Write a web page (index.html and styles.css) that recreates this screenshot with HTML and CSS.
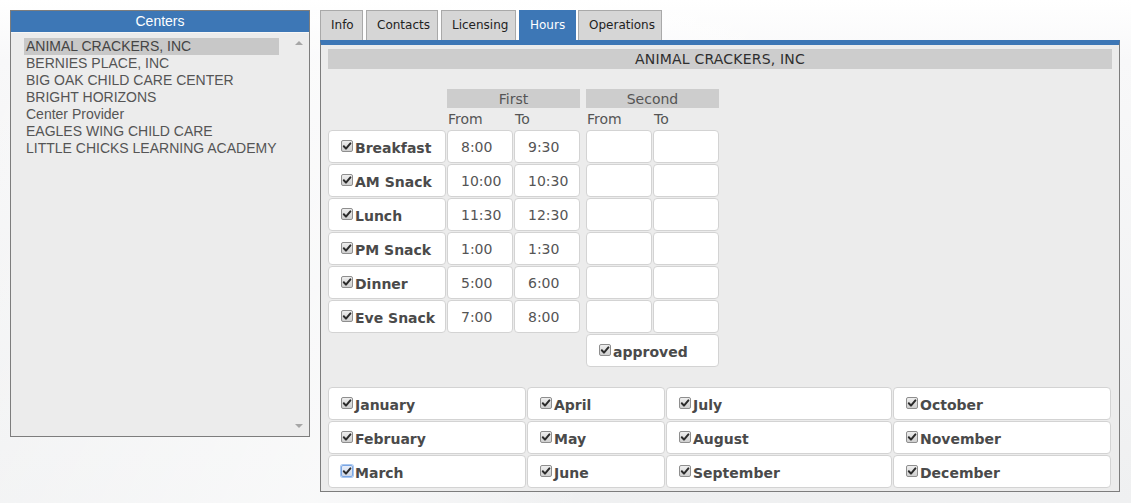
FILE: index.html
```html
<!DOCTYPE html>
<html>
<head>
<meta charset="utf-8">
<link rel="stylesheet" href="styles.css">
</head>
<body>
<div class="page">
  <aside class="centers">
    <div class="centers-title">Centers</div>
    <div class="listbox">
      <ul class="list">
        <li class="selected">ANIMAL CRACKERS, INC</li>
        <li>BERNIES PLACE, INC</li>
        <li>BIG OAK CHILD CARE CENTER</li>
        <li>BRIGHT HORIZONS</li>
        <li>Center Provider</li>
        <li>EAGLES WING CHILD CARE</li>
        <li>LITTLE CHICKS LEARNING ACADEMY</li>
      </ul>
      <div class="scroll">
        <span class="arrow up"></span>
        <span class="arrow down"></span>
      </div>
    </div>
  </aside>

  <main class="detail">
    <nav class="tabs">
      <span class="tab">Info</span>
      <span class="tab">Contacts</span>
      <span class="tab">Licensing</span>
      <span class="tab active">Hours</span>
      <span class="tab">Operations</span>
    </nav>
    <section class="panel">
      <div class="title-bar">ANIMAL CRACKERS, INC</div>

      <div class="hours">
        <div></div>
        <div class="group-head span2">First</div>
        <div></div>
        <div class="group-head span2">Second</div>

        <div></div>
        <div class="sub">From</div>
        <div class="sub">To</div>
        <div></div>
        <div class="sub">From</div>
        <div class="sub">To</div>

        <div class="cell label"><span class="cb"><svg viewBox="0 0 10 10"><path d="M1.8 5.2 L4 7.6 L8.4 2.4"/></svg></span>Breakfast</div>
        <div class="cell time">8:00</div><div class="cell time">9:30</div><div></div><div class="cell"></div><div class="cell"></div>

        <div class="cell label"><span class="cb"><svg viewBox="0 0 10 10"><path d="M1.8 5.2 L4 7.6 L8.4 2.4"/></svg></span>AM Snack</div>
        <div class="cell time">10:00</div><div class="cell time">10:30</div><div></div><div class="cell"></div><div class="cell"></div>

        <div class="cell label"><span class="cb"><svg viewBox="0 0 10 10"><path d="M1.8 5.2 L4 7.6 L8.4 2.4"/></svg></span>Lunch</div>
        <div class="cell time">11:30</div><div class="cell time">12:30</div><div></div><div class="cell"></div><div class="cell"></div>

        <div class="cell label"><span class="cb"><svg viewBox="0 0 10 10"><path d="M1.8 5.2 L4 7.6 L8.4 2.4"/></svg></span>PM Snack</div>
        <div class="cell time">1:00</div><div class="cell time">1:30</div><div></div><div class="cell"></div><div class="cell"></div>

        <div class="cell label"><span class="cb"><svg viewBox="0 0 10 10"><path d="M1.8 5.2 L4 7.6 L8.4 2.4"/></svg></span>Dinner</div>
        <div class="cell time">5:00</div><div class="cell time">6:00</div><div></div><div class="cell"></div><div class="cell"></div>

        <div class="cell label"><span class="cb"><svg viewBox="0 0 10 10"><path d="M1.8 5.2 L4 7.6 L8.4 2.4"/></svg></span>Eve Snack</div>
        <div class="cell time">7:00</div><div class="cell time">8:00</div><div></div><div class="cell"></div><div class="cell"></div>

        <div></div><div></div><div></div><div></div>
        <div class="cell label span2"><span class="cb"><svg viewBox="0 0 10 10"><path d="M1.8 5.2 L4 7.6 L8.4 2.4"/></svg></span>approved</div>
      </div>

      <div class="months">
        <div class="cell label"><span class="cb"><svg viewBox="0 0 10 10"><path d="M1.8 5.2 L4 7.6 L8.4 2.4"/></svg></span>January</div>
        <div class="cell label"><span class="cb"><svg viewBox="0 0 10 10"><path d="M1.8 5.2 L4 7.6 L8.4 2.4"/></svg></span>April</div>
        <div class="cell label"><span class="cb"><svg viewBox="0 0 10 10"><path d="M1.8 5.2 L4 7.6 L8.4 2.4"/></svg></span>July</div>
        <div class="cell label"><span class="cb"><svg viewBox="0 0 10 10"><path d="M1.8 5.2 L4 7.6 L8.4 2.4"/></svg></span>October</div>

        <div class="cell label"><span class="cb"><svg viewBox="0 0 10 10"><path d="M1.8 5.2 L4 7.6 L8.4 2.4"/></svg></span>February</div>
        <div class="cell label"><span class="cb"><svg viewBox="0 0 10 10"><path d="M1.8 5.2 L4 7.6 L8.4 2.4"/></svg></span>May</div>
        <div class="cell label"><span class="cb"><svg viewBox="0 0 10 10"><path d="M1.8 5.2 L4 7.6 L8.4 2.4"/></svg></span>August</div>
        <div class="cell label"><span class="cb"><svg viewBox="0 0 10 10"><path d="M1.8 5.2 L4 7.6 L8.4 2.4"/></svg></span>November</div>

        <div class="cell label"><span class="cb focus"><svg viewBox="0 0 10 10"><path d="M1.8 5.2 L4 7.6 L8.4 2.4"/></svg></span>March</div>
        <div class="cell label"><span class="cb"><svg viewBox="0 0 10 10"><path d="M1.8 5.2 L4 7.6 L8.4 2.4"/></svg></span>June</div>
        <div class="cell label"><span class="cb"><svg viewBox="0 0 10 10"><path d="M1.8 5.2 L4 7.6 L8.4 2.4"/></svg></span>September</div>
        <div class="cell label"><span class="cb"><svg viewBox="0 0 10 10"><path d="M1.8 5.2 L4 7.6 L8.4 2.4"/></svg></span>December</div>
      </div>
    </section>
  </main>
</div>
</body>
</html>
```

FILE: styles.css
```css
* { box-sizing: border-box; }

html, body {
  margin: 0;
  height: 100%;
}

body {
  background:
    linear-gradient(115deg, rgba(255,255,255,0) 0%, rgba(255,255,255,0.6) 40%, rgba(255,255,255,0) 60%),
    linear-gradient(180deg, #ffffff 0px, #f8f8f9 60px, #eff0f1 503px);
  font-family: "DejaVu Sans", Verdana, sans-serif;
  color: #4f4f4f;
  overflow: hidden;
}

.page {
  display: flex;
  align-items: flex-start;
  gap: 10px;
  padding: 10px;
}

/* ---------- Centers list ---------- */
.centers {
  width: 300px;
  height: 427px;
  border: 1px solid #7d7d7d;
  display: flex;
  flex-direction: column;
  background: #ececec;
}

.centers-title {
  height: 21px;
  background: #3d77b6;
  color: #ffffff;
  font-family: "Liberation Sans", Arial, sans-serif;
  font-size: 14px;
  line-height: 21px;
  text-align: center;
}

.listbox {
  flex: 1;
  display: flex;
  border-top: 1px solid #f7f7f7;
  background: #ececec;
}

.list {
  list-style: none;
  margin: 0;
  padding: 5px 0 0 13px;
  flex: 1;
  font-family: "Liberation Sans", Arial, sans-serif;
  font-size: 14px;
  color: #555555;
}

.list li {
  height: 17px;
  line-height: 17px;
  width: 255px;
  padding-left: 2px;
  white-space: nowrap;
}

.list li.selected {
  background: #c8c8c8;
  color: #444444;
}

.scroll {
  width: 20px;
  display: flex;
  flex-direction: column;
  justify-content: space-between;
  align-items: center;
  padding: 8px 0 8px 0;
}

.arrow {
  width: 0;
  height: 0;
  border-left: 4px solid transparent;
  border-right: 4px solid transparent;
}
.arrow.up { border-bottom: 4px solid #a6a6a6; }
.arrow.down { border-top: 4px solid #a6a6a6; }

/* ---------- Detail ---------- */
.detail {
  width: 800px;
  display: flex;
  flex-direction: column;
}

.tabs {
  display: flex;
  gap: 3px;
  height: 30px;
}

.tab {
  display: flex;
  align-items: center;
  padding: 0 10px 2px 10px;
  background: #d6d6d6;
  border: 1px solid #a9a9a9;
  border-bottom: none;
  font-size: 12px;
  color: #222222;
}

.tab:nth-child(1) { width: 43px; padding: 0 0 2px 10px; }
.tab:nth-child(2) { width: 72px; }
.tab:nth-child(3) { width: 75px; }
.tab:nth-child(4) { width: 57px; }
.tab:nth-child(5) { width: 84px; margin-left: -1px; }

.tab.active {
  background: #3d77b6;
  border-color: #3d77b6;
  color: #ffffff;
}

.panel {
  height: 452px;
  background: #ececec;
  border-top: 5px solid #3d77b6;
  border-left: 1px solid #7d7d7d;
  border-right: 1px solid #7d7d7d;
  border-bottom: 1px solid #7d7d7d;
  padding: 4px 7px 0 7px;
}

.title-bar {
  height: 20px;
  background: #cdcdcd;
  text-align: center;
  font-size: 14px;
  line-height: 20px;
  color: #2f2f2f;
  letter-spacing: 0.2px;
}

/* ---------- Hours grid ---------- */
.hours {
  margin-top: 20px;
  display: grid;
  grid-template-columns: 118px 66px 66px 4px 66px 66px;
  grid-template-rows: 19px 20px repeat(7, 33px);
  column-gap: 1px;
  row-gap: 1px;
}

.span2 { grid-column: span 2; }

.group-head {
  background: #cdcdcd;
  text-align: center;
  font-size: 14px;
  line-height: 20px;
  color: #555555;
}

.sub {
  font-size: 14px;
  color: #555555;
  display: flex;
  align-items: center;
  padding-left: 1px;
}

.cell {
  background: #ffffff;
  border: 1px solid #d3d3d3;
  border-radius: 4px;
  display: flex;
  align-items: center;
}

.cell.time {
  padding-left: 13px;
  font-size: 14px;
  color: #555555;
}

.cell.label {
  padding-left: 12px;
  font-weight: bold;
  font-size: 14px;
  color: #4a4a4a;
  padding-top: 2px;
}

.cb {
  width: 12px;
  height: 12px;
  margin-right: 2px;
  margin-top: -3px;
  border: 1px solid #8e8e8e;
  border-radius: 2px;
  background: linear-gradient(#eeeeee, #cfcfcf);
  display: inline-flex;
  align-items: center;
  justify-content: center;
  flex: none;
}

.cb svg {
  width: 10px;
  height: 10px;
}

.cb svg path {
  fill: none;
  stroke: #2b2b2b;
  stroke-width: 2;
  stroke-linecap: round;
  stroke-linejoin: round;
}

.cb.focus {
  border-color: #7ba6e3;
  box-shadow: 0 0 0 1px #a9c7f0;
  background: linear-gradient(#e8eefa, #cfd7e6);
}

/* ---------- Months grid ---------- */
.months {
  margin-top: 20px;
  display: grid;
  grid-template-columns: 198px 138px 226px 218px;
  grid-template-rows: repeat(3, 33px);
  column-gap: 1px;
  row-gap: 1px;
}
```
